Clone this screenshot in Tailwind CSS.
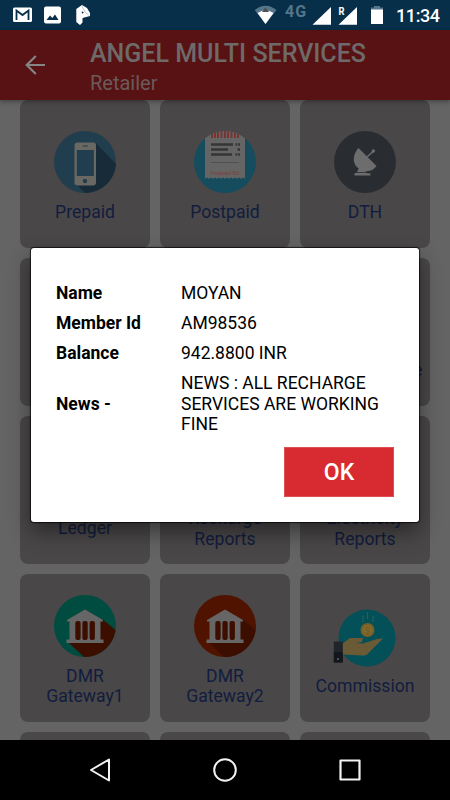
<!DOCTYPE html>
<html lang="en">
<head>
<meta charset="utf-8">
<title>Angel Multi Services</title>
<script src="https://cdn.jsdelivr.net/npm/@tailwindcss/browser@4"></script>
</head>
<body class="w-[450px] h-[800px] overflow-hidden relative flex flex-col bg-[#646464] font-[Roboto,sans-serif]">
<!-- status bar -->
<div class="h-[30px] shrink-0 bg-[#072f49] z-10">
<svg class="block" width="450" height="30" viewBox="0 0 450 30">
  <rect x="13" y="7.500" width="19" height="14.500" rx="1.500" fill="#fff"/>
  <path d="M16.500 20V10.500L22.500 15L28.500 10.500V20" fill="none" stroke="#072f49" stroke-width="1.800"/>
  <rect x="44" y="6.500" width="17" height="17" rx="2" fill="#fff"/>
  <path d="M46.500 20L50 15.500L52.300 18L55 14.500L58.500 20Z" fill="#072f49"/>
  <path d="M76.300 9L82 5L87 8L90 13V16L82.500 18V22.500L80 25L76.300 22Z" fill="#fff"/>
  <path d="M81.800 11.200L84 12.400L82 13.800Z" fill="#072f49"/><path d="M82 6L85 12L89 15.500" fill="none" stroke="#8fa0ad" stroke-width=".6"/>
  <path d="M254.700 10Q265.500 1.500 276.500 10L265.500 24Z" fill="#55758b"/>
  <path d="M257.500 13Q265.500 7.500 273.500 13L265.500 24Z" fill="#fff"/>
  <path d="M265.500 7.500L269 12H262Z" fill="#4d4f55"/>
  <text x="285" y="16.800" font-family="Roboto" font-weight="700" font-size="16" letter-spacing="1" fill="#55758b">4G</text>
  <path d="M331 7V24.700H312.500ZM357 7V24.700H338.500Z" fill="#fff"/>
  <text x="338.500" y="14.800" font-family="Roboto" font-weight="700" font-size="10" textLength="6" lengthAdjust="spacingAndGlyphs" fill="#fff">R</text>
  <path d="M371 8V7.500H374V6H380V7.500H383V10H371Z" fill="#55758b"/><rect x="371" y="9.500" width="12" height="14.500" fill="#fff"/>
  <text x="396" y="22" font-family="Roboto" font-weight="500" font-size="18" textLength="44" fill="#fff">11:34</text>
</svg>
</div>
<!-- app bar -->
<header class="h-[70px] shrink-0 bg-[#581213] z-10 flex shadow-[0_2px_4px_rgba(0,0,0,0.3)]">
  <svg class="ml-[25px] mt-[25px] shrink-0" width="20" height="20" viewBox="0 0 20 20" fill="none" stroke="#858585" stroke-width="2.200"><path d="M20 10H2M10.800 1L1.700 10L10.800 19"/></svg>
  <div class="ml-[45px] pt-[9px] whitespace-nowrap">
    <div class="text-[25px] leading-[30px] font-medium text-[#6e6a6a]">ANGEL MULTI SERVICES</div>
    <div class="text-[20px] leading-[28px] text-[#6b5a5a]">Retailer</div>
  </div>
</header>
<main class="h-[640px] overflow-hidden px-5 grid grid-cols-3 gap-[10px] auto-rows-[148px] content-start text-[17.600px] leading-[20.500px] text-center text-[#111d3e]">
  <div class="bg-[#4a4748] rounded-lg flex flex-col items-center justify-center pt-[6px] gap-[9px]">
    <svg width="62" height="62" viewBox="0 0 62 62"><circle cx="31" cy="31" r="31" fill="#213e4e"/><path d="M42 12L62 33A31 31 0 0 1 31 62L22 53Z" fill="#182b38"/><rect x="20.500" y="11.500" width="21.500" height="43" rx="3" fill="#696862"/><rect x="22.800" y="19" width="17" height="26" fill="#213e4e"/><rect x="28.500" y="14.300" width="5.500" height="1.500" rx=".7" fill="#3e4a4e"/><circle cx="31" cy="50" r="2.200" fill="#213e4e"/></svg>
    <div>Prepaid</div>
  </div>
  <div class="bg-[#4a4748] rounded-lg flex flex-col items-center justify-center pt-[6px] gap-[9px]">
    <svg width="62" height="62" viewBox="0 0 62 62"><circle cx="31" cy="31" r="31" fill="#154d5e"/><path d="M11 7.300A31 31 0 0 1 51 7.300V48Q49 45 47 48Q45 45 43 48Q41 45 39 48Q37 45 35 48Q33 45 31 48Q29 45 27 48Q25 45 23 48Q21 45 19 48Q17 45 15 48Q13 45 11 48Z" fill="#656565"/><path d="M18 3V7M21 1.500V7M24 .8V7M27.500 .3V7M31 0V7M34 .3V7M37.500 .8V7M41 1.500V7M44 3V7" stroke="#7d302c" stroke-width="1.800"/><path d="M17 13.500H39M17 18.500H34M17 23.500H38" stroke="#353535" stroke-width="2.500"/><path d="M41.500 13.500H46M41.500 23.500H46" stroke="#353535" stroke-width="2.500" stroke-dasharray="1.800 .9"/><path d="M44.800 17.200V19.800" stroke="#353535" stroke-width="2.300"/><path d="M17 31.500H45" stroke="#505050"/><text x="31" y="43.500" text-anchor="middle" font-family="Roboto" font-size="5.500" textLength="29" fill="#79403d">Postpaid Bill</text></svg>
    <div>Postpaid</div>
  </div>
  <div class="bg-[#4a4748] rounded-lg flex flex-col items-center justify-center pt-[6px] gap-[9px]">
    <svg width="62" height="62" viewBox="0 0 62 62"><circle cx="31" cy="31" r="31" fill="#292d32"/><path d="M24.500 17L42.500 35C39 40 34 41 29 39.500C20 37 16 27 24.500 17Z" fill="#6d6d6d"/><path d="M33 26L39 20.500" stroke="#6d6d6d" stroke-width="1.400"/><circle cx="39.300" cy="20" r="1.800" fill="#6d6d6d"/><path d="M25 37L22.500 42H20.500V44.500H36.500V42.500L32 42V38Z" fill="#6d6d6d"/><path d="M22 41.500H35" stroke="#292d32" stroke-width=".8"/></svg>
    <div>DTH</div>
  </div>
  <div class="bg-[#4a4748] rounded-lg"></div>
  <div class="bg-[#4a4748] rounded-lg"></div>
  <div class="bg-[#4a4748] rounded-lg flex flex-col items-center justify-center pt-[6px] gap-[9px]">
    <div class="h-[62px]"></div><div class="whitespace-nowrap tracking-[0.250px]">Gas Insurance</div>
  </div>
  <div class="bg-[#4a4748] rounded-lg flex flex-col items-center justify-center pt-[6px] gap-[9px]">
    <div class="h-[62px]"></div><div>Ledger</div>
  </div>
  <div class="bg-[#4a4748] rounded-lg flex flex-col items-center justify-center pt-[6px] gap-[9px]">
    <div class="h-[62px]"></div><div>Recharge<br>Reports</div>
  </div>
  <div class="bg-[#4a4748] rounded-lg flex flex-col items-center justify-center pt-[6px] gap-[9px]">
    <div class="h-[62px]"></div><div>Electricity<br>Reports</div>
  </div>
  <div class="bg-[#4a4748] rounded-lg flex flex-col items-center justify-center pt-[5px] gap-[9px]">
    <svg width="62" height="62" viewBox="0 0 62 62"><circle cx="31" cy="31" r="31" fill="#004c40"/><path d="M48 24L61.500 35A31 31 0 0 1 30 62L13 46Z" fill="#3c0e00"/><path d="M31 14.500L49 25V26.500H46.500V44.500H49.500V48H12.500V44.500H15.500V26.500H13V25Z" fill="#666"/><g fill="#3c0e00"><rect x="21.300" y="26" width="5.300" height="19" rx="2"/><rect x="28.400" y="26" width="5.300" height="19" rx="2"/><rect x="35.600" y="26" width="5.300" height="19" rx="2"/></g></svg>
    <div>DMR<br>Gateway1</div>
  </div>
  <div class="bg-[#4a4748] rounded-lg flex flex-col items-center justify-center pt-[5px] gap-[9px]">
    <svg width="62" height="62" viewBox="0 0 62 62"><circle cx="31" cy="31" r="31" fill="#4f1300"/><path d="M48 24L61.500 35A31 31 0 0 1 30 62L13 46Z" fill="#3c0e00"/><path d="M31 14.500L49 25V26.500H46.500V44.500H49.500V48H12.500V44.500H15.500V26.500H13V25Z" fill="#666"/><g fill="#3c0e00"><rect x="21.300" y="26" width="5.300" height="19" rx="2"/><rect x="28.400" y="26" width="5.300" height="19" rx="2"/><rect x="35.600" y="26" width="5.300" height="19" rx="2"/></g></svg>
    <div>DMR<br>Gateway2</div>
  </div>
  <div class="bg-[#4a4748] rounded-lg flex flex-col items-center justify-center pt-[6px] gap-[9px]">
    <svg width="64" height="62" viewBox="0 0 64 62"><circle cx="34" cy="33" r="28.500" fill="#045058"/><path d="M30 10.500V17M34.500 7V14M40 10.500V17" stroke="#315c5c"/><circle cx="34.500" cy="25" r="7" fill="#796026"/><circle cx="34.500" cy="25" r="5" fill="#82692d"/><text x="34.500" y="28.500" text-anchor="middle" font-family="Roboto" font-size="9" fill="#705a24">$</text><path d="M9 39L17 33H30L29 37L23 38L30 38.500L44 34L50 33.500L34 49.500Q32 51 29 50.500L9 49.500Z" fill="#6b5a36"/><rect x=".8" y="36.500" width="9" height="21" fill="#1f252b"/><rect x=".8" y="47" width="9" height="10.500" fill="#12171c"/><circle cx="5" cy="54" r="1" fill="#666"/></svg>
    <div>Commission</div>
  </div>
  <div class="bg-[#4a4748] rounded-lg"></div>
  <div class="bg-[#4a4748] rounded-lg"></div>
  <div class="bg-[#4a4748] rounded-lg"></div>
</main>
<!-- navigation bar -->
<nav class="h-[60px] shrink-0 bg-black z-10 flex items-center justify-between px-[88px]">
  <svg width="24" height="24" viewBox="0 0 24 24" fill="none" stroke="#f2f2f2" stroke-width="2" stroke-linejoin="round"><path d="M21 1.500V22.500L3 12Z"/></svg>
  <svg width="24" height="24" viewBox="0 0 24 24" fill="none" stroke="#f2f2f2" stroke-width="2"><circle cx="12" cy="12" r="10.800"/></svg>
  <svg width="24" height="24" viewBox="0 0 24 24" fill="none" stroke="#f2f2f2" stroke-width="2.200" stroke-linejoin="round"><rect x="2.500" y="2.500" width="19" height="19"/></svg>
</nav>
<!-- account dialog -->
<div class="absolute z-20 left-[31px] top-[248px] w-[388px] h-[274px] bg-white rounded-[3px] px-[25px] pt-[29px] text-black text-[17.500px] leading-[20.500px] shadow-[0_0_1px_1px_rgba(0,0,0,0.7),0_10px_22px_rgba(0,0,0,0.45)]">
  <div class="grid grid-cols-[125px_1fr] items-center gap-y-[9.500px] pt-[6px]">
    <b>Name</b><span>MOYAN</span>
    <b>Member Id</b><span>AM98536</span>
    <b>Balance</b><span>942.8800 INR</span>
    <b>News -</b><span>NEWS : ALL RECHARGE<br>SERVICES ARE WORKING<br>FINE</span>
  </div>
  <div class="mt-[12px] ml-auto w-[110px] h-[50px] pt-[3px] bg-[#d82b31] border border-[#dc5054] text-white text-[23px] font-medium flex items-center justify-center">OK</div>
</div>
</body>
</html>
